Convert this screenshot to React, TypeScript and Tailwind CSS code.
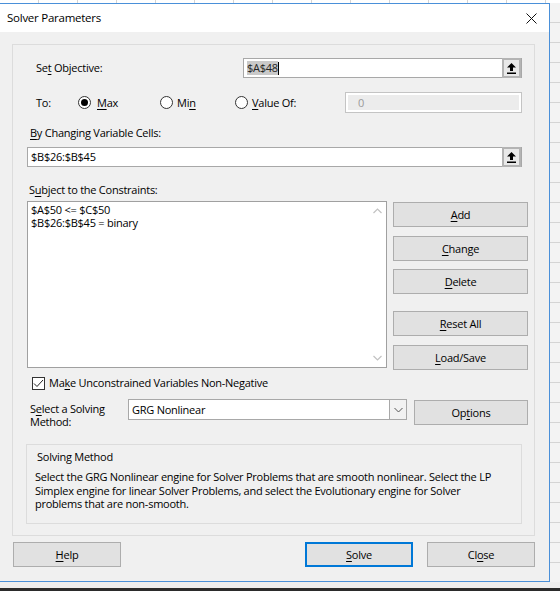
import React from 'react';

const U = ({ children }: { children: React.ReactNode }) => (
  <span className="underline underline-offset-[2px] decoration-[1px]">{children}</span>
);

const Btn = ({ children, className = '' }: { children: React.ReactNode; className?: string }) => (
  <div className={`h-[25px] flex items-center justify-center bg-[#e1e1e1] border border-[#adadad] ${className}`}>
    {children}
  </div>
);

const RefButton = () => (
  <div className="w-[19px] h-[20px] flex items-center justify-center bg-[#e9e9e9] border-2 border-[#b4b4b4]">
    <svg width="9" height="11" viewBox="0 0 9 11">
      <path d="M4.5 0 L9 4.5 H6 V8 H3 V4.5 H0 Z" fill="#000" />
      <rect x="0" y="9.5" width="9" height="1.5" fill="#000" />
    </svg>
  </div>
);

const Radio = ({ checked }: { checked?: boolean }) => (
  <div className="w-[13px] h-[13px] rounded-full border border-[#333] bg-white flex items-center justify-center shrink-0">
    {checked && <div className="w-[7px] h-[7px] rounded-full bg-[#000]" />}
  </div>
);

export default function App() {
  return (
    <div className="w-[560px] h-[591px] flex flex-col bg-white overflow-hidden text-[11px] tracking-[-0.25px] leading-[16px] text-black font-['Open_Sans','Noto_Sans',sans-serif]">
      {/* excel sheet behind the dialog */}
      <div className="h-[3px] bg-[repeating-linear-gradient(90deg,#ffffff_0px,#ffffff_38px,#d4d4d4_38px,#d4d4d4_39px)]" />

      <div className="flex h-[579px]">
        <div className="w-[550px] h-[579px] flex flex-col bg-[#f0f0f0] border-t border-r border-b border-[#4a90d9]">
          {/* title bar */}
          <div className="h-[28px] bg-white flex items-center justify-between pl-[7px] pr-[10px]">
            <span className="text-[11.5px]">Solver Parameters</span>
            <svg width="11" height="11" viewBox="0 0 11 11" className="mr-[2px]">
              <path d="M0.5 0.5 L10.5 10.5 M10.5 0.5 L0.5 10.5" stroke="#111" strokeWidth="1" />
            </svg>
          </div>

          {/* body */}
          <div className="pt-[12px] pl-[12px]">
            <div className="w-[523px] h-[492px] border border-[#dcdcdc] flex flex-col">
              {/* set objective */}
              <div className="mt-[13px] h-[20px] flex items-center">
                <div className="ml-[23px] w-[207px]">
                  Se<U>t</U> Objective:
                </div>
                <div className="w-[279px] h-[20px] bg-white border border-[#a8a8a8] flex items-center justify-between">
                  <div className="flex items-center pl-[3px]">
                    <span className="bg-[#c9c9c9] text-[#222] leading-[14px]">$A$48</span>
                    <span className="w-[1px] h-[13px] bg-black" />
                  </div>
                  <RefButton />
                </div>
              </div>

              {/* to */}
              <div className="mt-[14px] h-[21px] flex items-center">
                <div className="ml-[23px] w-[42px]">To:</div>
                <div className="w-[82px] flex items-center gap-[6px]">
                  <Radio checked />
                  <span>
                    <U>M</U>ax
                  </span>
                </div>
                <div className="w-[75px] flex items-center gap-[4px]">
                  <Radio />
                  <span>
                    Mi<U>n</U>
                  </span>
                </div>
                <div className="w-[110px] flex items-center gap-[4px]">
                  <Radio />
                  <span>
                    <U>V</U>alue Of:
                  </span>
                </div>
                <div className="w-[177px] h-[21px] border border-[#c4c4c4] bg-white p-[2px]">
                  <div className="h-full bg-[#ececec] flex items-center pl-[10px] text-[#9a9a9a]">0</div>
                </div>
              </div>

              {/* changing cells */}
              <div className="mt-[12px] ml-[17px]">
                <U>B</U>y Changing Variable Cells:
              </div>
              <div className="mt-[6px] ml-[14px] w-[495px] h-[20px] bg-white border border-[#a8a8a8] flex items-center justify-between">
                <span className="pl-[3px]">$B$26:$B$45</span>
                <RefButton />
              </div>

              {/* constraints */}
              <div className="mt-[15px] ml-[16px]">
                S<U>u</U>bject to the Constraints:
              </div>
              <div className="mt-[3px] flex">
                <div className="ml-[14px] w-[360px] h-[167px] bg-white border border-[#a0a0a0] flex">
                  <div className="flex-1 pl-[3px] pt-[1px] leading-[13px]">
                    <div>$A$50 &lt;= $C$50</div>
                    <div>$B$26:$B$45 = binary</div>
                  </div>
                  <div className="w-[17px] flex flex-col justify-between items-center py-[6px]">
                    <svg width="9" height="6" viewBox="0 0 9 6">
                      <path d="M0.5 5 L4.5 1 L8.5 5" stroke="#c2c2c2" strokeWidth="1.2" fill="none" />
                    </svg>
                    <svg width="9" height="6" viewBox="0 0 9 6">
                      <path d="M0.5 1 L4.5 5 L8.5 1" stroke="#c2c2c2" strokeWidth="1.2" fill="none" />
                    </svg>
                  </div>
                </div>
                <div className="ml-[6px] w-[135px] flex flex-col">
                  <Btn className="mt-[1px]">
                    <span>
                      <U>A</U>dd
                    </span>
                  </Btn>
                  <Btn className="mt-[9px]">
                    <span>
                      <U>C</U>hange
                    </span>
                  </Btn>
                  <Btn className="mt-[8px]">
                    <span>
                      <U>D</U>elete
                    </span>
                  </Btn>
                  <Btn className="mt-[17px]">
                    <span>
                      <U>R</U>eset All
                    </span>
                  </Btn>
                  <Btn className="mt-[9px]">
                    <span>
                      <U>L</U>oad/Save
                    </span>
                  </Btn>
                </div>
              </div>

              {/* non-negative */}
              <div className="mt-[5px] h-[16px] flex items-center">
                <div className="ml-[19px] w-[13px] h-[13px] border border-[#333] bg-white flex items-center justify-center">
                  <svg width="11" height="9" viewBox="0 0 11 9">
                    <path d="M1 4.5 L4 7.5 L10 1" stroke="#222" strokeWidth="1" fill="none" />
                  </svg>
                </div>
                <span className="ml-[4px]">
                  Ma<U>k</U>e Unconstrained Variables Non-Negative
                </span>
              </div>

              {/* solving method */}
              <div className="mt-[8px] h-[29px] flex items-start">
                <div className="ml-[17px] w-[98px] mt-[3px] leading-[13px]">
                  <div>
                    S<U>e</U>lect a Solving
                  </div>
                  <div>Method:</div>
                </div>
                <div className="w-[279px] h-[21px] bg-white border border-[#a8a8a8] flex items-center justify-between">
                  <span className="pl-[3px]">GRG Nonlinear</span>
                  <div className="w-[17px] h-full border-l border-[#a8a8a8] bg-[#f2f2f2] flex items-center justify-center">
                    <svg width="9" height="6" viewBox="0 0 9 6">
                      <path d="M0.5 1 L4.5 5 L8.5 1" stroke="#555" strokeWidth="1" fill="none" />
                    </svg>
                  </div>
                </div>
                <Btn className="ml-[7px] w-[114px] mt-[1px]">
                  <span>
                    Op<U>t</U>ions
                  </span>
                </Btn>
              </div>

              <div className="mt-[16px] ml-[13px] w-[496px] h-[80px] border border-[#dcdcdc] flex flex-col">
                <div className="mt-[4px] ml-[10px]">Solving Method</div>
                <div className="mt-[5px] ml-[8px] leading-[13.5px] whitespace-nowrap">
                  Select the GRG Nonlinear engine for Solver Problems that are smooth nonlinear. Select the LP
                  <br />
                  Simplex engine for linear Solver Problems, and select the Evolutionary engine for Solver
                  <br />
                  problems that are non-smooth.
                </div>
              </div>
            </div>
          </div>

          {/* bottom buttons */}
          <div className="mt-[6px] flex pl-[13px]">
            <Btn className="w-[108px]">
              <span>
                <U>H</U>elp
              </span>
            </Btn>
            <Btn className="ml-[184px] w-[108px] !border-[#0078d7] border-2">
              <span>
                <U>S</U>olve
              </span>
            </Btn>
            <Btn className="ml-[14px] w-[108px]">
              <span>
                Cl<U>o</U>se
              </span>
            </Btn>
          </div>
        </div>
        <div className="flex-1 bg-[repeating-linear-gradient(180deg,#f3f3f3_0px,#f3f3f3_19px,#d4d4d4_19px,#d4d4d4_20px)]" />
      </div>

      <div className="h-[6px] bg-[#eeeeee]" />
      <div className="h-[3px] bg-[#2b2b2b]" />
    </div>
  );
}
